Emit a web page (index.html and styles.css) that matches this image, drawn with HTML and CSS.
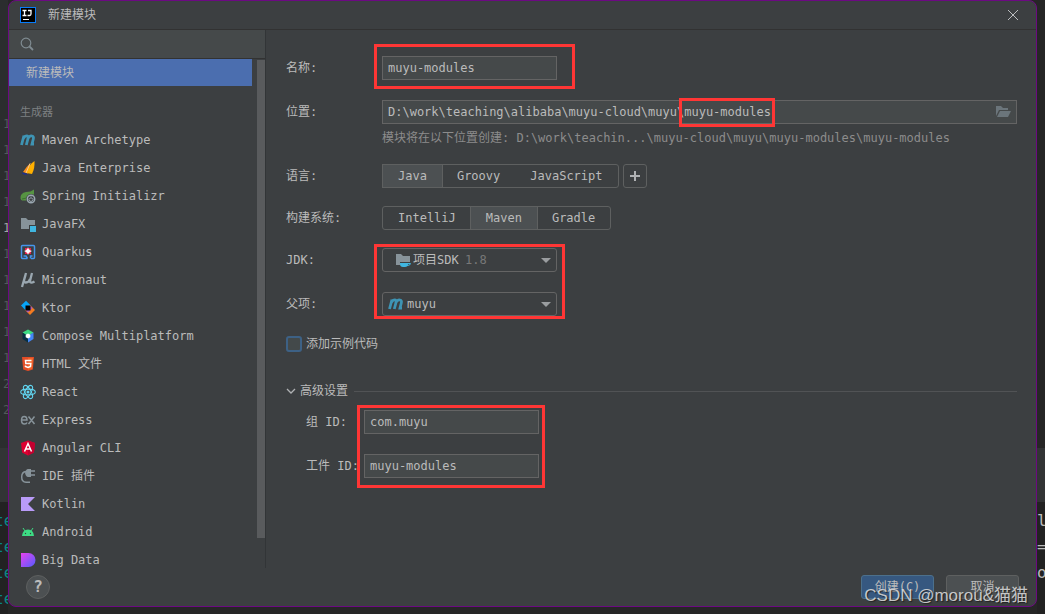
FILE: index.html
```html
<!DOCTYPE html>
<html lang="zh-CN">
  <head>
    <meta charset="UTF-8" />
    <meta name="viewport" content="width=device-width, initial-scale=1.0" />
    <title>新建模块</title>
    <link rel="stylesheet" href="styles.css">
  </head>
  <body>
    <!-- editor behind the dialog, left edge -->
    <div class="editor-edge editor-left" aria-hidden="true">
      <div class="line-numbers">
        <span>1</span><span>1</span><span>1</span><span>1</span>
        <span class="current">1</span><span>1</span><span>1</span><span>1</span>
        <span>1</span><span>1</span><span>2</span><span>2</span>
      </div>
      <div class="tool-header"></div>
      <div class="console">
        <span>te</span><span>te</span><span>te</span><span>te</span>
      </div>
    </div>

    <div class="dialog" role="dialog" aria-labelledby="title">
      <header class="title-bar">
        <svg class="logo" viewBox="0 0 16 16">
          <rect width="16" height="16" fill="#087cfa" />
          <rect x="1" y="1" width="14" height="14" fill="#000" />
          <path d="M2.500 3.500h4M4.500 3.500v5M2.500 8.500h4M8 3.500h3v3.500q0 1.500-1.500 1.500H7.500" stroke="#fff" stroke-width="1.300" fill="none" />
          <rect x="3" y="12" width="6" height="1" fill="#fff" />
        </svg>
        <h1 id="title">新建模块</h1>
        <button class="close" type="button" aria-label="关闭">
          <svg viewBox="0 0 12 12"><path d="M1 1l10 10M11 1L1 11" stroke="#bcbec0" fill="none" /></svg>
        </button>
      </header>

      <div class="content">
        <aside class="sidebar">
          <label class="search">
            <svg viewBox="0 0 16 16"><path d="M10.500 10.500L14 14" stroke="#7f8b91" stroke-width="1.800" /><circle cx="7" cy="7" r="4.800" stroke="#7f8b91" stroke-width="1.200" fill="none" /></svg>
            <input type="text" aria-label="搜索" />
          </label>
          <div class="list-area">
            <nav class="generators">
              <a class="selected" href="#">新建模块</a>
              <h2>生成器</h2>
              <a href="#">
                <svg viewBox="0 0 16 16"><path d="M1.500 13L4 3.500M3.300 6.500Q5 3.500 7 4Q8.600 4.300 8 6.500L6.300 13M7.600 7Q9.500 3.500 12 4Q14 4.400 13.300 7L12 12.200H14" stroke="#3e94b4" stroke-width="2.800" fill="none" /></svg>
                Maven Archetype
              </a>
              <a href="#">
                <svg viewBox="0 0 16 16"><path d="M2 12.500L8 14L6 15L2.500 14z" fill="#1c2d91" /><path d="M3 12Q7 6 10.500 3L8 13.500z" fill="#f98e1d" /><path d="M14.500 1Q9 4 6.500 13L12 14Q15 8 14.500 1z" fill="#ffb000" /><path d="M10 3.500L6 13" stroke="#f9ce90" stroke-width="1" /></svg>
                Java Enterprise
              </a>
              <a href="#">
                <svg viewBox="0 0 16 16"><path d="M14 1.500Q11 4 6 4Q0 5 .5 10.500Q1 12 2 12.500H7Q14 11 14 6z" fill="#569442" /><path d="M2 11Q7 11 10 7" stroke="#3c6e31" fill="none" /><circle cx="11" cy="11" r="5" fill="#3c3f41" /><circle cx="11" cy="11" r="3.700" fill="none" stroke="#9aa7b0" stroke-width="1.500" /><path d="M11 8.500v2.500M9.400 10.200a2 2 0 1 0 3.200 0" stroke="#9aa7b0" fill="none" /></svg>
                Spring Initializr
              </a>
              <a href="#">
                <svg viewBox="0 0 16 16"><path d="M1 2h5l2 2h7v5H9v4H1z" fill="#87939a" /><rect x="10" y="10" width="6" height="6" fill="#40b6e0" /></svg>
                JavaFX
              </a>
              <a href="#">
                <svg viewBox="0 0 16 16"><path d="M7.500 14.500L6 12H3.500M11 14.500h2.500q1 0 1-1v-11q0-1-1-1h-11q-1 0-1 1v11q0 1 1 1h5M10.500 14.500V12h2" stroke="#4695eb" stroke-width="1.500" fill="none" /><path d="M5 4h6v6H5z" fill="#e8214e" /><path d="M8 3l1 3 3 1-3 1.500L8 11 7 8.500 4 7l3-1z" fill="#fff" /><circle cx="8" cy="7" r="2" fill="#fff" /></svg>
                Quarkus
              </a>
              <a href="#">
                <svg viewBox="0 0 16 16"><path d="M6 1L2 15M5.500 3L4 8.500Q4 10.500 6 10.500Q9 10.500 10 7M12 1L10 9Q10 12 14.500 9.500" stroke="#9aa7b0" stroke-width="2.300" fill="none" /></svg>
                Micronaut
              </a>
              <a href="#">
                <svg viewBox="0 0 16 16"><path d="M1 5.500L6 .8l5 5-5 5z" fill="#07a5f7" /><path d="M5 10l5-5 5 5-5 5z" fill="#f47b20" /><path d="M6 10.500L10.500 6l2 2-4.500 4.500z" fill="#a25ac5" /><rect x="5.500" y="5.500" width="5" height="5" fill="#000" /></svg>
                Ktor
              </a>
              <a href="#">
                <svg viewBox="0 0 16 16"><path d="M8 1.500l5.500 3-5.500 4-5.500-4z" fill="#3ddc84" /><path d="M2.500 4.500L8 8v6.500l-5.500-3.500z" fill="#083042" /><path d="M13.500 4.500L8 8v6.500l5.500-3.500z" fill="#4285f4" /><path d="M8 5.500l2.300 1.300v2.500L8 10.500 5.700 9.300V6.800z" fill="#fff" /></svg>
                Compose Multiplatform
              </a>
              <a href="#">
                <svg viewBox="0 0 16 16"><path d="M2 1h12l-1.200 12.500L8 15l-4.800-1.500z" fill="#e44d26" /><path d="M8 2h5l-1 10.700L8 14z" fill="#f16529" /><path d="M11.500 4.500h-6L5.800 7.500h5L10.500 10.500 8 11.500l-2.500-1V9.500" stroke="#fff" stroke-width="1.500" fill="none" /></svg>
                HTML 文件
              </a>
              <a href="#">
                <svg viewBox="0 0 16 16"><g stroke="#61d5f0" stroke-width="1.100" fill="none"><ellipse cx="8" cy="8" rx="7.300" ry="2.900" /><ellipse cx="8" cy="8" rx="7.300" ry="2.900" transform="rotate(60 8 8)" /><ellipse cx="8" cy="8" rx="7.300" ry="2.900" transform="rotate(120 8 8)" /></g><circle cx="8" cy="8" r="1.500" fill="#61d5f0" /></svg>
                React
              </a>
              <a href="#">
                <svg viewBox="0 0 16 16"><path d="M1.500 8H7Q7 4.500 4.300 4.500T1.500 8.200Q1.500 12 4.500 12Q6.500 12 7 10.500M8.500 4.500L14.500 12M14.500 4.500L8.500 12" stroke="#87939a" stroke-width="1.500" fill="none" /></svg>
                Express
              </a>
              <a href="#">
                <svg viewBox="0 0 16 16"><path d="M8 .5l7 2.500-1.100 9.500L8 15.500 2.100 12.500 1 3z" fill="#dd0031" /><path d="M8 .5l7 2.500-1.100 9.500L8 15.500z" fill="#c3002f" /><path d="M4.500 11.500L8 3.500l3.500 8M6 9h4" stroke="#fff" stroke-width="1.500" fill="none" /></svg>
                Angular CLI
              </a>
              <a href="#">
                <svg viewBox="0 0 16 16"><path d="M5 5q1-4 3-4h3v8H8Q6 9 5 5z" fill="#87939a" /><path d="M11 3h4M11 7h4M6 3.500Q1.700 4 1.700 9T6 14.300h4" stroke="#87939a" stroke-width="1.500" fill="none" /></svg>
                IDE 插件
              </a>
              <a href="#">
                <svg viewBox="0 0 16 16"><path d="M1 1h14L8 8l7 7H1z" fill="#b99bf8" /></svg>
                Kotlin
              </a>
              <a href="#">
                <svg viewBox="0 0 16 16"><path d="M2 12Q2.500 5.500 8 5.500t6 6.500z" fill="#3ddc84" /><path d="M3 4l2 3M13 4l-2 3" stroke="#3ddc84" /><circle cx="5.500" cy="9.500" r=".7" fill="#3c3f41" /><circle cx="10.500" cy="9.500" r=".7" fill="#3c3f41" /></svg>
                Android
              </a>
              <a href="#">
                <svg viewBox="0 0 16 16"><defs><linearGradient id="data" x2="1" y2="1"><stop stop-color="#e842ef" /><stop offset="1" stop-color="#525cff" /></linearGradient></defs><path d="M1 1h7.500a7 7 0 0 1 0 14H1z" fill="url(#data)" /></svg>
                Big Data
              </a>
            </nav>
            <div class="scrollbar"></div>
          </div>
        </aside>

        <form class="settings">
          <div class="row">
            <label for="name">名称:</label>
            <div class="field">
              <input id="name" class="box" type="text" value="muyu-modules" />
              <span class="mark mark-name"></span>
            </div>
          </div>
          <div class="row row-location">
            <label for="location">位置:</label>
            <div class="field field-wide">
              <div class="box location">
                <input id="location" type="text" value="D:\work\teaching\alibaba\muyu-cloud\muyu\muyu-modules" />
                <button type="button" aria-label="浏览">
                  <svg viewBox="0 0 16 16"><path d="M1 2h5l2 2h5v2H4L1 12z" fill="#6b757b" /><path d="M5 7h11l-3 6H2z" fill="#6b757b" /></svg>
                </button>
              </div>
              <span class="mark mark-location"></span>
            </div>
          </div>
          <p class="hint">模块将在以下位置创建: D:\work\teachin...\muyu-cloud\muyu\muyu-modules\muyu-modules</p>

          <div class="row row-close">
            <span class="label">语言:</span>
            <div class="segments">
              <button class="active" type="button">Java</button>
              <button type="button">Groovy</button>
              <button type="button">JavaScript</button>
            </div>
            <button class="add" type="button" aria-label="添加">
              <svg viewBox="0 0 16 16"><path d="M8 3v10M3 8h10" stroke="#afb1b3" stroke-width="2" /></svg>
            </button>
          </div>
          <div class="row row-close">
            <span class="label">构建系统:</span>
            <div class="segments">
              <button type="button">IntelliJ</button>
              <button class="active" type="button">Maven</button>
              <button type="button">Gradle</button>
            </div>
          </div>

          <div class="group">
            <div class="row">
              <label for="jdk">JDK:</label>
              <div class="box combo combo-jdk">
                <svg viewBox="0 0 16 16"><path d="M1 2h5l2 2h7v6H5v3H1z" fill="#87939a" /><path d="M5 11h8v1q0 3-3 3H8q-3 0-3-3z" fill="#40b6e0" /><path d="M12 11.500h3.500q0 2-3.500 2" stroke="#40b6e0" fill="none" /></svg>
                <select id="jdk"><option>项目SDK</option></select>
                <span class="version">1.8</span>
                <span class="arrow"></span>
              </div>
            </div>
            <div class="row">
              <label for="parent">父项:</label>
              <div class="box combo">
                <svg viewBox="0 0 16 16"><path d="M1.500 13L4 3.500M3.300 6.500Q5 3.500 7 4Q8.600 4.300 8 6.500L6.300 13M7.600 7Q9.500 3.500 12 4Q14 4.400 13.300 7L12 12.200H14" stroke="#3e94b4" stroke-width="2.800" fill="none" /></svg>
                <select id="parent"><option>muyu</option></select>
                <span class="arrow"></span>
              </div>
            </div>
            <span class="mark mark-combos"></span>
          </div>

          <label class="sample"><input type="checkbox" />添加示例代码</label>

          <h2 class="advanced">
            <svg viewBox="0 0 10 10"><path d="M1 3l4 4 4-4" stroke="#afb1b3" stroke-width="1.300" fill="none" /></svg>
            高级设置
          </h2>
          <div class="group group-ids">
            <div class="row">
              <label for="group-id">组 ID:</label>
              <input id="group-id" class="box" type="text" value="com.muyu" />
            </div>
            <div class="row">
              <label for="artifact-id">工件 ID:</label>
              <input id="artifact-id" class="box" type="text" value="muyu-modules" />
            </div>
            <span class="mark mark-ids"></span>
          </div>
        </form>
      </div>

      <footer class="actions">
        <button class="help" type="button">?</button>
        <button class="button primary" type="button">创建(C)</button>
        <button class="button" type="button">取消</button>
      </footer>
    </div>

    <!-- editor behind the dialog, right edge -->
    <div class="editor-edge editor-right" aria-hidden="true">
      <div class="code"></div>
      <div class="tool-header"></div>
      <div class="console">
        <span>l</span><span>=</span><span>o</span>
      </div>
    </div>
    <div class="watermark">CSDN @morou&amp;猫猫</div>
  </body>
</html>
```
FILE: styles.css
```css
* {
  margin: 0;
  padding: 0;
  box-sizing: border-box;
}

body {
  display: flex;
  min-height: 100vh;
  overflow: hidden;
  position: relative;
  color: #bbbbbb;
  background-color: #262626;
  font-family: 'DejaVu Sans Mono', 'Noto Sans CJK SC', monospace;
  font-size: 12px;
  line-height: 16px;
}

input,
select,
button {
  color: inherit;
  font: inherit;
  border: none;
  outline: none;
  background: none;
}

h1,
h2 {
  font-size: 12px;
  font-weight: normal;
}

svg {
  display: block;
  flex: none;
  width: 16px;
  height: 16px;
}

/* editor strips */
.editor-edge {
  display: flex;
  flex-direction: column;
  flex: none;
  width: 8px;
  height: 100vh;
  overflow: hidden;
}

.editor-edge span {
  display: block;
  line-height: 26px;
}

.line-numbers {
  flex: none;
  height: 448px;
  padding: 111px 0 0 3px;
  color: #55585a;
  background-color: #2b2d2e;
}

.line-numbers .current {
  color: #a4a3a3;
}

.tool-header {
  flex: none;
  height: 54px;
  background-color: #323435;
}

.console {
  flex: 1;
  padding-top: 6px;
  font-size: 16px;
  background-color: #222222;
}

.editor-left .console {
  color: #0b8585;
}

.editor-left .console span {
  margin-left: -6px;
}

.editor-right .code {
  flex: none;
  height: 448px;
}

/* dialog */
.dialog {
  display: flex;
  flex: 1;
  flex-direction: column;
  min-width: 0;
  height: calc(100vh - 7px);
  border: 1px solid #6c0a82;
  border-radius: 8px;
  overflow: hidden;
  background-color: #3c3f41;
}

.title-bar {
  display: flex;
  align-items: center;
  flex: none;
  gap: 12px;
  height: 29px;
  padding: 0 17px 0 11px;
  border-bottom: 1px solid #323232;
}

.title-bar h1 {
  flex: 1;
}

.close svg {
  width: 12px;
  height: 12px;
}

.content {
  display: flex;
  flex: 1;
  min-height: 0;
}

.sidebar {
  display: flex;
  flex: none;
  flex-direction: column;
  width: 257px;
  border-right: 1px solid #323537;
}

.search {
  display: flex;
  align-items: center;
  flex: none;
  gap: 6px;
  height: 29px;
  padding: 0 10px;
  border-bottom: 1px solid #323232;
  background-color: #45494a;
}

.search input {
  flex: 1;
  min-width: 0;
}

.list-area {
  display: flex;
  flex: 1;
  gap: 5px;
  min-height: 0;
}

.generators {
  flex: 1;
  overflow: hidden;
}

.generators a {
  display: flex;
  align-items: center;
  gap: 6px;
  height: 28px;
  padding-left: 11px;
  color: inherit;
  white-space: nowrap;
  text-decoration: none;
}

.generators .selected {
  height: 27px;
  padding-left: 17px;
  background-color: #4b6eaf;
}

.generators h2 {
  padding: 14px 0 0 11px;
  color: #7d8082;
  font-size: 11px;
  line-height: 26px;
}

.scrollbar {
  width: 8px;
  margin: 1px 0 30px;
  background-color: #595b5d;
}

/* form */
.settings {
  flex: 1;
  min-width: 0;
  padding: 26px 19px 0 20px;
}

.row {
  display: flex;
  align-items: center;
  height: 24px;
  margin-bottom: 20px;
}

.row > label,
.label {
  flex: none;
  width: 96px;
  white-space: nowrap;
}

.row-location {
  margin-bottom: 0;
}

.row-close {
  margin-bottom: 18px;
}

.field {
  position: relative;
}

.field-wide {
  flex: 1;
}

.box {
  width: 175px;
  height: 24px;
  padding: 0 5px;
  border: 1px solid #646464;
  background-color: #45494a;
}

.location {
  display: flex;
  align-items: center;
  width: 100%;
}

.location input {
  flex: 1;
  min-width: 0;
}

.hint {
  height: 40px;
  padding-left: 96px;
  color: #8c8c8c;
  line-height: 28px;
  white-space: nowrap;
}

.segments {
  display: flex;
  height: 24px;
  border: 1px solid #5e6060;
  border-radius: 3px;
}

.segments button {
  padding: 0 15px;
}

.segments .active {
  background-color: #4c5052;
  box-shadow: 0 0 0 1px #5e6060;
}

.add {
  width: 24px;
  height: 24px;
  margin-left: 4px;
  padding: 3px;
  border: 1px solid #5e6060;
  border-radius: 3px;
}

.group {
  position: relative;
}

.combo {
  display: flex;
  align-items: center;
  gap: 3px;
  border-radius: 3px;
  background-color: #3c3f41;
}

.combo-jdk {
  gap: 2px;
  padding-left: 12px;
}

.combo select {
  appearance: none;
}

.version {
  padding-left: 4px;
  color: #787878;
}

.arrow {
  margin-left: auto;
  border: 5px solid transparent;
  border-top-color: #9a9da0;
  border-bottom: none;
}

.sample {
  display: flex;
  align-items: center;
  gap: 4px;
  height: 16px;
}

.sample input {
  appearance: none;
  width: 16px;
  height: 16px;
  border: 2px solid #3d6185;
  border-radius: 3px;
  background-color: #43494a;
}

.advanced {
  display: flex;
  align-items: center;
  gap: 4px;
  height: 20px;
  margin: 29px 0 9px;
}

.advanced::after {
  content: '';
  flex: 1;
  height: 1px;
  margin-left: 2px;
  background-color: #515355;
}

.advanced svg {
  width: 10px;
  height: 10px;
}

.group-ids {
  padding-left: 20px;
}

.group-ids label {
  width: 58px;
}

/* red highlight frames */
.mark {
  position: absolute;
  border: 3px solid #ff3635;
  pointer-events: none;
}

.mark-name {
  inset: -12px -18px -9px -8px;
}

.mark-location {
  top: -2px;
  left: 297px;
  width: 96px;
  height: 29px;
}

.mark-combos {
  top: -4px;
  left: 88px;
  width: 191px;
  height: 75px;
}

.mark-ids {
  top: -5px;
  left: 71px;
  width: 188px;
  height: 83px;
}

/* footer */
.actions {
  display: flex;
  align-items: center;
  flex: none;
  gap: 12px;
  height: 38px;
  padding: 0 17px;
}

.help {
  width: 24px;
  height: 24px;
  margin-right: auto;
  border: 1px solid #5e6060;
  border-radius: 50%;
  background-color: #4c5052;
  font-size: 16px;
  font-weight: bold;
  line-height: 20px;
}

.button {
  width: 73px;
  height: 24px;
  border: 1px solid #5e6060;
  border-radius: 3px;
  background-color: #4c5052;
}

.primary {
  border-color: #4c708c;
  background-color: #365880;
}

.watermark {
  position: absolute;
  right: 17px;
  bottom: 8px;
  color: rgba(225, 225, 225, 0.85);
  font-family: 'Liberation Sans', 'Noto Sans CJK SC', sans-serif;
  font-size: 17px;
  line-height: 20px;
  text-shadow: 1px 1px 1px #222222;
  pointer-events: none;
}
```
